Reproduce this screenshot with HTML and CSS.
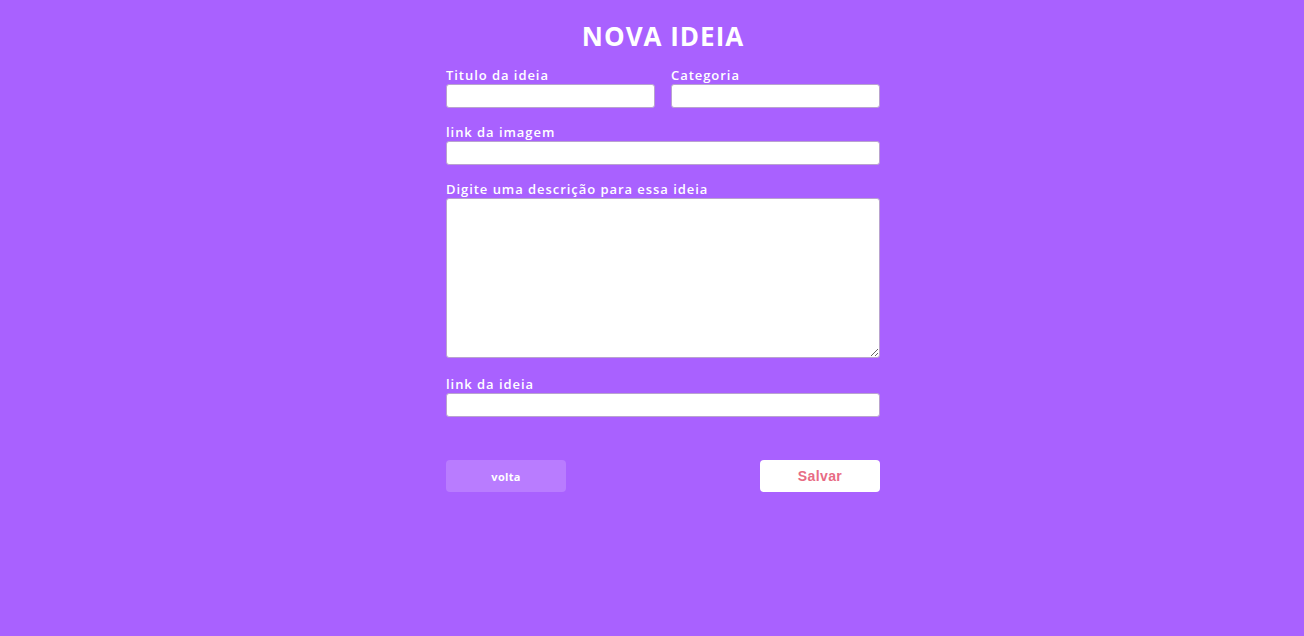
FILE: index.html
```html
<!DOCTYPE html>
<html lang="pt">
<head>
<meta charset="utf-8">
<title>Nova ideia</title>
<link rel="stylesheet" href="styles.css">
</head>
<body>
<main class="page">
  <form class="form">
    <h1 class="title">NOVA IDEIA</h1>
    <div class="row two">
      <div class="field">
        <label class="label">Titulo da ideia</label>
        <input class="input" type="text">
      </div>
      <div class="field">
        <label class="label">Categoria</label>
        <input class="input" type="text">
      </div>
    </div>
    <div class="row">
      <div class="field">
        <label class="label">link da imagem</label>
        <input class="input" type="text">
      </div>
    </div>
    <div class="row">
      <div class="field">
        <label class="label">Digite uma descrição para essa ideia</label>
        <textarea class="textarea"></textarea>
      </div>
    </div>
    <div class="row row-after-text">
      <div class="field">
        <label class="label">link da ideia</label>
        <input class="input" type="text">
      </div>
    </div>
    <div class="actions">
      <button type="button" class="btn btn-back">volta</button>
      <button type="button" class="btn btn-save">Salvar</button>
    </div>
  </form>
</main>
</body>
</html>
```
FILE: styles.css
```css
html, body {
  margin: 0;
  padding: 0;
  background: #a961ff;
  height: 100%;
}
body {
  font-family: "Open Sans", "DejaVu Sans", sans-serif;
  color: #fff;
}
.page {
  display: flex;
  justify-content: center;
  padding-left: 22px;
}
.form {
  width: 434px;
  display: flex;
  flex-direction: column;
}
.title {
  margin: 20px 0 16px;
  font-size: 26px;
  line-height: 32px;
  font-weight: 700;
  text-align: center;
  letter-spacing: 1px;
}
.row {
  display: flex;
  gap: 16px;
  margin-bottom: 17px;
}
.row.two .field { flex: 1; }
.field {
  display: flex;
  flex-direction: column;
  flex: 1;
}
.label {
  font-size: 13px;
  line-height: 15px;
  font-weight: 600;
  margin-bottom: 1px;
  letter-spacing: 0.95px;
}
.input {
  box-sizing: border-box;
  height: 24px;
  margin: 0;
  border: 1px solid #b9a3cf;
  border-radius: 3px;
  background: #fff;
  font: inherit;
}
.textarea {
  box-sizing: border-box;
  height: 160px;
  margin: 0;
  border: 1px solid #b9a3cf;
  border-radius: 3px;
  background: #fff;
  font: inherit;
  resize: vertical;
}
.row-after-text { margin-top: 2px; margin-bottom: 43px; }
.actions {
  display: flex;
  justify-content: space-between;
}
.btn {
  width: 120px;
  height: 32px;
  border: none;
  border-radius: 4px;
  cursor: pointer;
  font-weight: 700;
}
.btn-back {
  background: #b97cff;
  color: #fff;
  font-family: "Open Sans", sans-serif;
  font-size: 11px;
  letter-spacing: 0.3px;
}
.btn-save {
  background: #fff;
  color: #e86b84;
  font-family: "Liberation Sans", Arial, sans-serif;
  font-size: 14px;
  letter-spacing: 0.4px;
}
```
